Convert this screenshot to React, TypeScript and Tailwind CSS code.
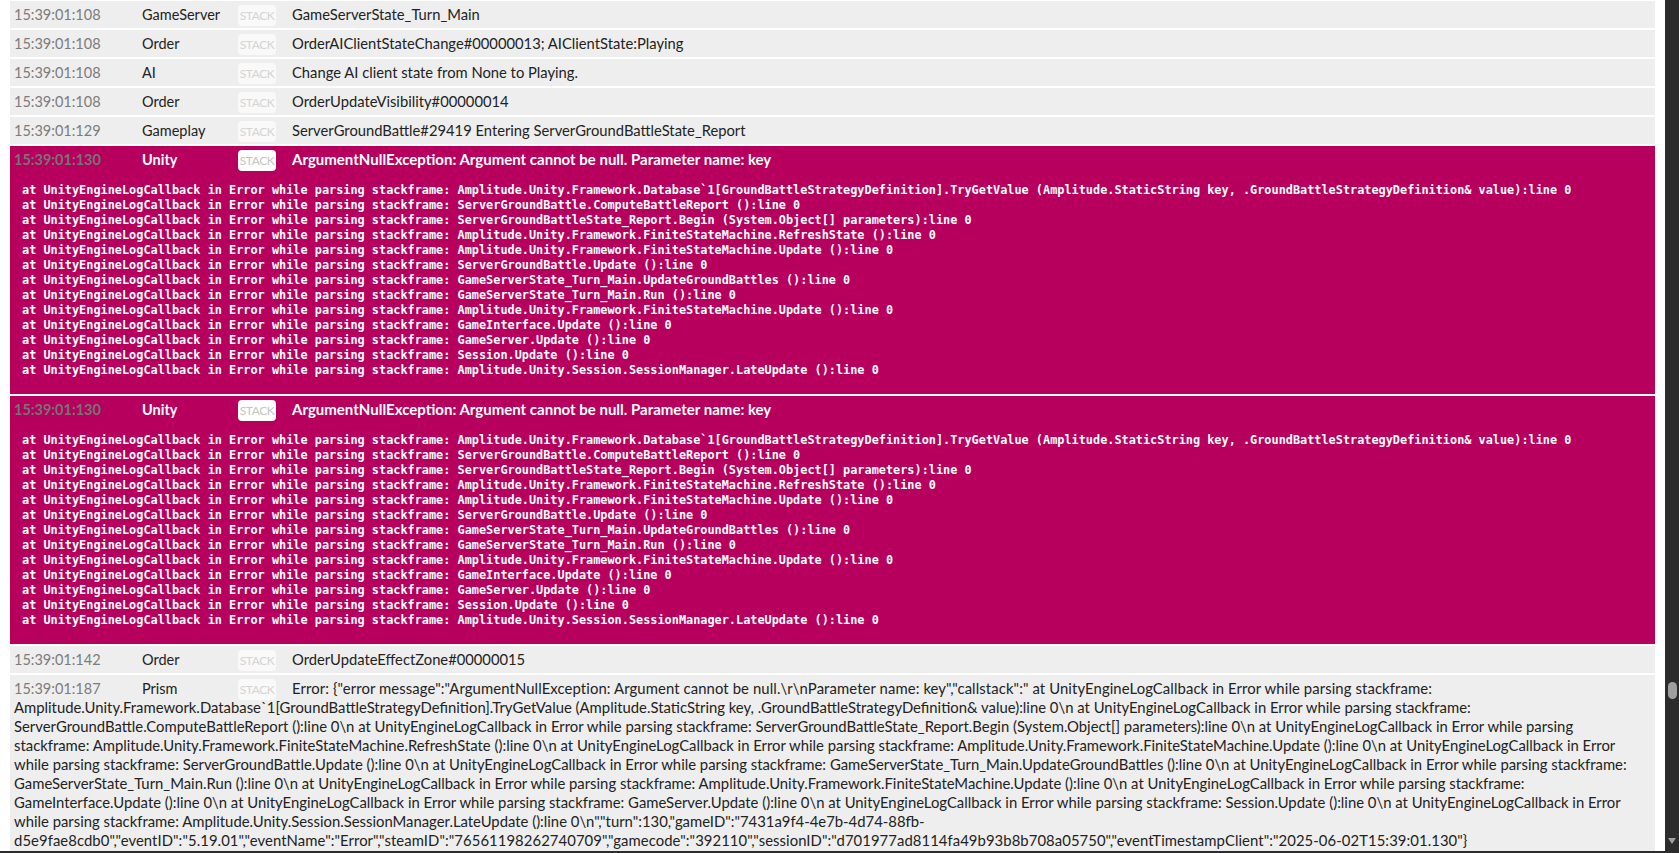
import React from 'react';

type Row = { time: string; cat: string; msg: string; msgClass?: string };

const stackLines = [
  'Amplitude.Unity.Framework.Database`1[GroundBattleStrategyDefinition].TryGetValue (Amplitude.StaticString key, .GroundBattleStrategyDefinition& value):line 0',
  'ServerGroundBattle.ComputeBattleReport ():line 0',
  'ServerGroundBattleState_Report.Begin (System.Object[] parameters):line 0',
  'Amplitude.Unity.Framework.FiniteStateMachine.RefreshState ():line 0',
  'Amplitude.Unity.Framework.FiniteStateMachine.Update ():line 0',
  'ServerGroundBattle.Update ():line 0',
  'GameServerState_Turn_Main.UpdateGroundBattles ():line 0',
  'GameServerState_Turn_Main.Run ():line 0',
  'Amplitude.Unity.Framework.FiniteStateMachine.Update ():line 0',
  'GameInterface.Update ():line 0',
  'GameServer.Update ():line 0',
  'Session.Update ():line 0',
  'Amplitude.Unity.Session.SessionManager.LateUpdate ():line 0',
];

const topRows: Row[] = [
  { time: '15:39:01:108', cat: 'GameServer', msg: 'GameServerState_Turn_Main' },
  { time: '15:39:01:108', cat: 'Order', msg: 'OrderAIClientStateChange#00000013; AIClientState:Playing' },
  { time: '15:39:01:108', cat: 'AI', msg: 'Change AI client state from None to Playing.' },
  { time: '15:39:01:108', cat: 'Order', msg: 'OrderUpdateVisibility#00000014' },
  { time: '15:39:01:129', cat: 'Gameplay', msg: 'ServerGroundBattle#29419 Entering ServerGroundBattleState_Report' },
];

const prismTail = [
  'Amplitude.Unity.Framework.Database`1[GroundBattleStrategyDefinition].TryGetValue (Amplitude.StaticString key, .GroundBattleStrategyDefinition& value):line 0\\n at UnityEngineLogCallback in Error while parsing stackframe:',
  'ServerGroundBattle.ComputeBattleReport ():line 0\\n at UnityEngineLogCallback in Error while parsing stackframe: ServerGroundBattleState_Report.Begin (System.Object[] parameters):line 0\\n at UnityEngineLogCallback in Error while parsing',
  'stackframe: Amplitude.Unity.Framework.FiniteStateMachine.RefreshState ():line 0\\n at UnityEngineLogCallback in Error while parsing stackframe: Amplitude.Unity.Framework.FiniteStateMachine.Update ():line 0\\n at UnityEngineLogCallback in Error',
  'while parsing stackframe: ServerGroundBattle.Update ():line 0\\n at UnityEngineLogCallback in Error while parsing stackframe: GameServerState_Turn_Main.UpdateGroundBattles ():line 0\\n at UnityEngineLogCallback in Error while parsing stackframe:',
  'GameServerState_Turn_Main.Run ():line 0\\n at UnityEngineLogCallback in Error while parsing stackframe: Amplitude.Unity.Framework.FiniteStateMachine.Update ():line 0\\n at UnityEngineLogCallback in Error while parsing stackframe:',
  'GameInterface.Update ():line 0\\n at UnityEngineLogCallback in Error while parsing stackframe: GameServer.Update ():line 0\\n at UnityEngineLogCallback in Error while parsing stackframe: Session.Update ():line 0\\n at UnityEngineLogCallback in Error',
  'while parsing stackframe: Amplitude.Unity.Session.SessionManager.LateUpdate ():line 0\\n","turn":130,"gameID":"7431a9f4-4e7b-4d74-88fb-',
];

const lastLine = 'd5e9fae8cdb0","eventID":"5.19.01","eventName":"Error","steamID":"76561198262740709","gamecode":"392110","sessionID":"d701977ad8114fa49b93b8b708a05750","eventTimestampClient":"2025-06-02T15:39:01.130"}';

const StackButton = ({ error }: { error?: boolean }) => (
  <div className={`absolute left-[228px] top-[4px] flex h-[21px] w-[38px] items-center justify-center rounded-[4px] text-[12px] font-normal tracking-[-0.4px] ${error ? 'bg-white text-[#c4c4c4]' : 'bg-[#f9f9f9] text-[#d4d4d4]'}`}>
    STACK
  </div>
);

const RowHead = ({ time, cat, msg, msgClass, error }: Row & { error?: boolean }) => (
  <div className="relative flex h-[27px] items-center">
    <span className={`w-[132px] shrink-0 pl-[4px] text-[14.5px] ${error ? 'font-bold text-[#757575]' : 'text-[#7c7c7c]'}`}>{time}</span>
    <span className="w-[150px] shrink-0 text-[14.5px]">{cat}</span>
    <StackButton error={error} />
    <span className={`whitespace-nowrap ${msgClass ?? (error ? 'text-[15px]' : 'text-[14.75px]')}`}>{msg}</span>
  </div>
);

const ErrorBlock = () => (
  <div className="h-[248px] bg-[#b7005d] font-bold text-white">
    <RowHead time="15:39:01:130" cat="Unity" msg="ArgumentNullException: Argument cannot be null. Parameter name: key" error />
    <div className="pl-[12px] pt-[10px] font-['DejaVu_Sans_Mono',monospace] text-[11.87px] leading-[15px]">
      {stackLines.map((l, i) => (
        <div key={i} className="whitespace-pre">{`at UnityEngineLogCallback in Error while parsing stackframe: ${l}`}</div>
      ))}
    </div>
  </div>
);

export default function App() {
  return (
    <div className="flex h-[853px] w-[1679px] overflow-hidden bg-white font-['Lato',sans-serif] text-[#222222]">
      <div className="flex min-w-0 flex-1 flex-col gap-[2px] border-b-2 border-[#2c2c2c] px-[10px] pt-[1px]">
        {topRows.map((r, i) => (
          <div key={i} className="bg-[#eeeeee]"><RowHead {...r} /></div>
        ))}
        <ErrorBlock />
        <ErrorBlock />
        <div className="bg-[#eeeeee]">
          <RowHead time="15:39:01:142" cat="Order" msg="OrderUpdateEffectZone#00000015" />
        </div>
        <div className="min-h-0 flex-1 bg-[#eeeeee]">
          <RowHead
            time="15:39:01:187"
            cat="Prism"
            msgClass="text-[14.85px] tracking-[0.1px]"
            msg={'Error: {"error message":"ArgumentNullException: Argument cannot be null.\\r\\nParameter name: key","callstack":" at UnityEngineLogCallback in Error while parsing stackframe:'}
          />
          <div className="-mt-[4px] whitespace-nowrap pl-[4px] text-[14.85px] leading-[19px]">
            {prismTail.map((l, i) => <div key={i}>{l}</div>)}
            <div className="tracking-[0.07px]">{lastLine}</div>
          </div>
        </div>
      </div>
      <div className="relative w-[14px] shrink-0 bg-[#2c2c2c]">
        <div className="absolute left-[3px] top-[682px] h-[17px] w-[9px] rounded-full bg-[#9f9f9f]" />
        <div className="absolute left-[3px] top-[838px] h-0 w-0 border-x-[4.5px] border-t-[6px] border-x-transparent border-t-[#9f9f9f]" />
      </div>
    </div>
  );
}
